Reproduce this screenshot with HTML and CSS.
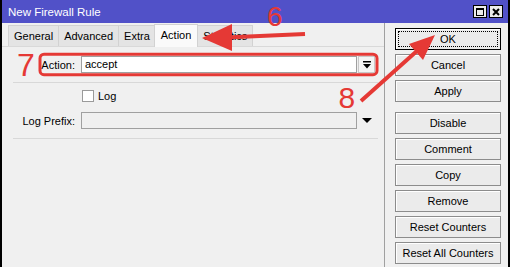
FILE: index.html
```html
<!DOCTYPE html>
<html lang="en">
<head>
  <meta charset="UTF-8" />
  <title>New Firewall Rule</title>
  <link rel="stylesheet" href="styles.css">
</head>
<body>

  <div class="window">
    <div class="titlebar">
      <span class="title">New Firewall Rule</span>
      <div class="tb-btns">
        <span class="tb-btn">
          <svg width="8" height="8" viewBox="0 0 8 8"><rect x="0.5" y="0.5" width="7" height="7" fill="none" stroke="#000"/><rect x="0" y="0" width="8" height="2" fill="#000"/></svg>
        </span>
        <span class="tb-btn">
          <svg width="8" height="8" viewBox="0 0 8 8"><path d="M1 1 L7 7 M7 1 L1 7" stroke="#000" stroke-width="2"/></svg>
        </span>
      </div>
    </div>

    <div class="body">
      <div class="main">
        <div class="tabs">
          <span class="tab">General</span>
          <span class="tab">Advanced</span>
          <span class="tab">Extra</span>
          <span class="tab active">Action</span>
          <span class="tab">Statistics</span>
        </div>

        <div class="pane">
          <div class="row">
            <span class="label">Action:</span>
            <span class="field">accept</span>
            <span class="drop-btn">
              <svg width="8" height="8" viewBox="0 0 8 8"><rect x="0" y="0" width="8" height="1.5" fill="#000"/><path d="M0 3 L8 3 L4 7.5 Z" fill="#000"/></svg>
            </span>
          </div>

          <div class="sep"></div>

          <div class="row check-row">
            <span class="checkbox"></span>
            <span>Log</span>
          </div>

          <div class="row prefix-row">
            <span class="label">Log Prefix:</span>
            <span class="field disabled"></span>
            <span class="tri"></span>
          </div>

          <div class="sep sep-2"></div>
        </div>
      </div>

      <div class="side">
        <button class="btn ok">OK</button>
        <button class="btn">Cancel</button>
        <button class="btn">Apply</button>
        <button class="btn group">Disable</button>
        <button class="btn">Comment</button>
        <button class="btn">Copy</button>
        <button class="btn">Remove</button>
        <button class="btn">Reset Counters</button>
        <button class="btn">Reset All Counters</button>
      </div>
    </div>

    <!-- red tutorial markings drawn over the dialog -->
    <svg class="annot" width="510" height="267" viewBox="0 0 510 267">
      <rect x="40" y="54.2" width="337" height="20.5" rx="4" fill="none" stroke="#e53935" stroke-width="3"/>
      <line x1="305" y1="34" x2="226" y2="37.5" stroke="#e53935" stroke-width="4"/>
      <polygon points="202,38 232,24 232,51" fill="#e53935"/>
      <line x1="361" y1="101" x2="418" y2="50" stroke="#e53935" stroke-width="4"/>
      <polygon points="435,35 409,44 423,60" fill="#e53935"/>
      <text x="267" y="26" class="num" font-size="28">6</text>
      <text x="17" y="76" class="num" font-size="32">7</text>
      <text x="338.5" y="108" class="num" font-size="30">8</text>
    </svg>
  </div>

</body>
</html>
```

FILE: styles.css
```css
body {
  margin: 0;
  font-family: "Liberation Sans", Arial, sans-serif;
  font-size: 11px;
  color: #000;
  background: #f0f0f0;
}

.window {
  position: relative;
  width: 510px;
  height: 267px;
  box-sizing: border-box;
  border-left: 2px solid #000;
  border-right: 2px solid #000;
  background: #f0f0f0;
  display: flex;
  flex-direction: column;
  overflow: hidden;
}

/* Title bar */
.titlebar {
  height: 23px;
  flex: none;
  background: #5151c8;
  color: #fff;
  display: flex;
  align-items: center;
  justify-content: space-between;
  padding: 0 5px 0 6px;
  font-size: 11.5px;
}

.tb-btns {
  display: flex;
  gap: 2px;
}

.tb-btn {
  width: 14px;
  height: 13px;
  box-sizing: border-box;
  border: 1px solid #000;
  background: #ececec;
  display: flex;
  align-items: center;
  justify-content: center;
}

.body {
  flex: 1;
  display: flex;
}

.main {
  flex: 1;
  display: flex;
  flex-direction: column;
}

/* Tabs */
.tabs {
  height: 23px;
  box-sizing: border-box;
  display: flex;
  align-items: flex-end;
  padding-left: 6px;
}

.tab {
  height: 20px;
  line-height: 20px;
  padding: 0 5px;
  background: #e4e4e4;
  border: 1px solid #d2d2d2;
  border-bottom: none;
  margin-right: -1px;
}

.tab.active {
  height: 22px;
  line-height: 21px;
  padding: 0 6px;
  margin: 0 -1px -1px -1px;
  background: #fafafa;
  position: relative;
  z-index: 1;
}

.pane {
  flex: 1;
  border-top: 1px solid #d9d9d9;
  padding-top: 9px;
}

.row {
  display: flex;
  align-items: center;
}

.label {
  width: 73px;
  margin-right: 6px;
  text-align: right;
}

.field {
  width: 276px;
  height: 17px;
  box-sizing: border-box;
  border: 1px solid #a0a0a0;
  background: #fff;
  padding: 0 3px;
  line-height: 15px;
}

.field.disabled {
  background: #f0f0f0;
}

.drop-btn {
  width: 17px;
  height: 17px;
  box-sizing: border-box;
  margin-left: 1px;
  border: 1px solid #c8c8c8;
  background: #f4f4f4;
  display: flex;
  align-items: center;
  justify-content: center;
}

.sep {
  height: 1px;
  background: #d8d8d8;
  margin: 9px 6px 0 11px;
}

.check-row {
  margin-top: 7px;
  padding-left: 80px;
  gap: 4px;
}

.checkbox {
  width: 12px;
  height: 12px;
  box-sizing: border-box;
  border: 1px solid #9a9a9a;
  background: #fff;
}

.prefix-row {
  margin-top: 10px;
}

.tri {
  margin-left: 5px;
  width: 0;
  height: 0;
  border-left: 5px solid transparent;
  border-right: 5px solid transparent;
  border-top: 5px solid #000;
}

/* Right column buttons */
.side {
  width: 124px;
  box-sizing: border-box;
  border-left: 1px solid #a0a0a0;
  padding: 5px 7px 0 10px;
  display: flex;
  flex-direction: column;
  gap: 4px;
}

.btn {
  height: 22px;
  box-sizing: border-box;
  border: 1px solid #8c8c8c;
  background: #ebebeb;
  box-shadow: inset 1px 1px 0 #fff;
  font-family: inherit;
  font-size: 11px;
  color: #000;
  padding: 0;
  text-align: center;
}

.btn.ok {
  position: relative;
  border-color: #000;
}

.btn.ok::after {
  content: "";
  position: absolute;
  top: 2px;
  left: 2px;
  right: 2px;
  bottom: 2px;
  border: 1px dotted #000;
}

.btn.group {
  margin-top: 6px;
}

/* Annotation overlay */
.annot {
  position: absolute;
  top: 0;
  left: -2px;
  pointer-events: none;
}

.num {
  fill: #e53935;
  font-family: "Liberation Sans", Arial, sans-serif;
}
```
